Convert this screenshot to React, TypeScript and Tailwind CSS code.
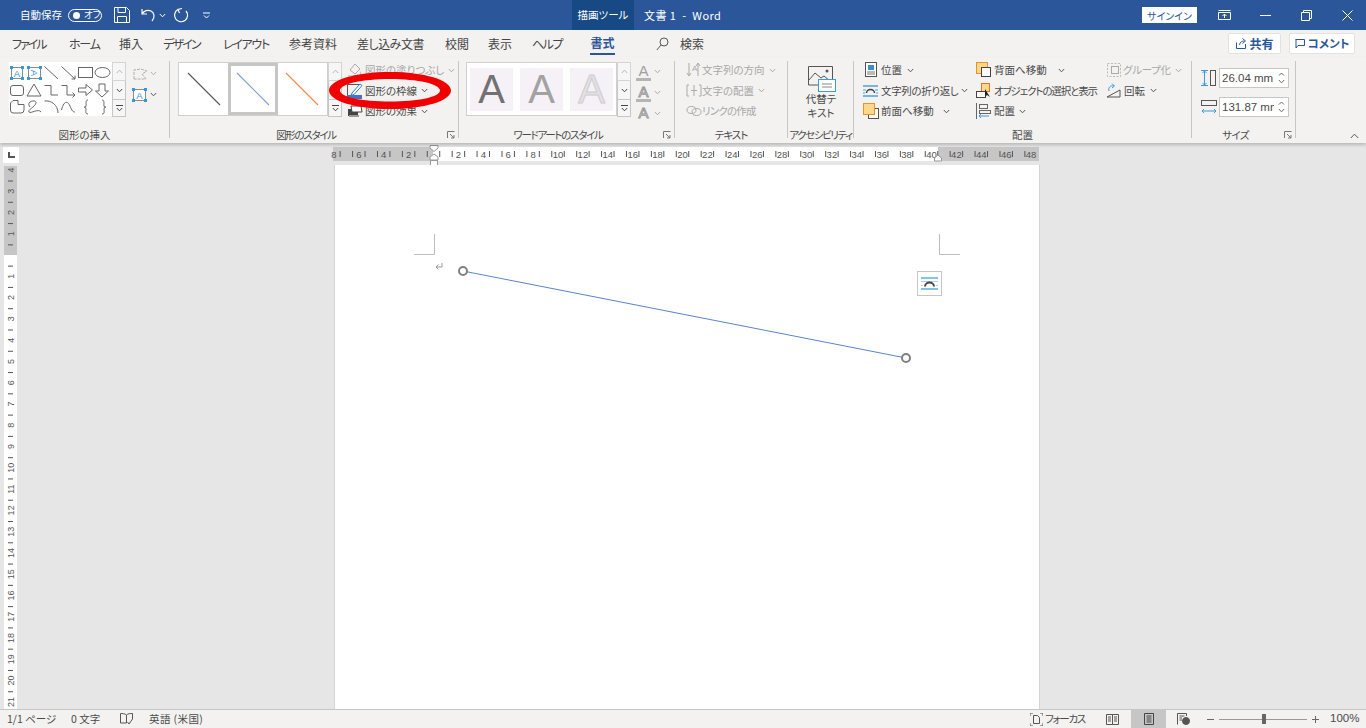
import React from "react";

const Chev = ({ c = "#555", cls = "" }: { c?: string; cls?: string }) => (
  <svg width="7" height="5" viewBox="0 0 7 5" className={"shrink-0 " + cls}>
    <path d="M.8 1 3.5 3.8 6.2 1" fill="none" stroke={c} strokeWidth="1" />
  </svg>
);

const I = ({ children, w = 16, h = 16 }: { children: React.ReactNode; w?: number; h?: number }) => (
  <svg width={w} height={h} viewBox={`0 0 ${w} ${h}`} className="shrink-0" fill="none">
    {children}
  </svg>
);

const Item = ({ icon, label, dim, chevCls, textCls }: { icon: React.ReactNode; label: string; dim?: boolean; chevCls?: string; textCls?: string }) => (
  <div className={"flex h-[20.5px] items-center whitespace-nowrap " + (dim ? "text-[#a8a8a8]" : "text-[#4a4a4a]")}>
    {icon}
    <span className={textCls ?? "ml-[2px]"}>{label}</span>
    {chevCls !== "none" && <Chev c={dim ? "#a8a8a8" : "#555"} cls={chevCls ?? "ml-[4px]"} />}
  </div>
);

const Launcher = () => (
  <svg width="8" height="8" viewBox="0 0 8 8" className="absolute right-[3px] top-[3px]" fill="none" stroke="#777">
    <path d="M.5 7V.5H7.5M3 3l4 4M7 4v3H4" />
  </svg>
);

const Group = ({ w, label, labelCls = "", launcher, children }: { w: string; label: string; labelCls?: string; launcher?: boolean; children: React.ReactNode }) => (
  <div className={"flex h-[77px] shrink-0 flex-col border-r border-[#c8c6c4] " + w}>
    <div className="flex h-[67px] shrink-0">{children}</div>
    <div className={"relative h-[13px] shrink-0 whitespace-nowrap text-center text-[10.5px] leading-[13px] text-[#4a4a4a] " + labelCls}>
      {label}
      {launcher && <Launcher />}
    </div>
  </div>
);

const Scroll = () => (
  <div className="flex w-[14px] shrink-0 flex-col">
    <div className="flex h-[19px] items-center justify-center border border-[#d4d4d4] bg-[#f6f6f6]">
      <svg width="7" height="5" viewBox="0 0 7 5"><path d="M.8 4 3.5 1.2 6.2 4" fill="none" stroke="#b5b5b5" /></svg>
    </div>
    <div className="flex h-[18px] items-center justify-center border-x border-[#c6c6c6] bg-[#f6f6f6]">
      <Chev c="#444" />
    </div>
    <div className="flex h-[18px] flex-col items-center justify-center border border-[#c6c6c6] bg-[#f6f6f6]">
      <div className="mb-[1px] h-[1px] w-[7px] bg-[#444]" />
      <Chev c="#444" />
    </div>
  </div>
);

const TextBox = ({ x, y, w, h, vert }: { x: number; y: number; w: number; h: number; vert?: boolean }) => (
  <g>
    <rect x={x} y={y} width={w} height={h} fill="#fff" stroke="#8a8a8a" />
    <text x={x + w / 2} y={y + h / 2 + 3.5} textAnchor="middle" fontSize="9.5" fontFamily="Liberation Sans" fill="#2f8fd8" stroke="none" transform={vert ? `rotate(90 ${x + w / 2} ${y + h / 2})` : undefined}>A</text>
    {[[x, y], [x + w, y], [x, y + h], [x + w, y + h]].map(([a, b], i) => (
      <rect key={i} x={a - 1.5} y={b - 1.5} width="3" height="3" fill="#2f9ae0" stroke="none" />
    ))}
  </g>
);

const ShapeGallery = () => (
  <svg width="103" height="54" viewBox="9 62 103 54" className="shrink-0 bg-white" fill="none" stroke="#666" strokeWidth="1">
    <TextBox x={11.5} y={67.5} w={11} h={11} />
    <TextBox x={28.5} y={67.5} w={12} h={11} vert />
    <path d="M44.5 66.5 58 79" />
    <path d="M61.5 66.5 75 79M75 75.5V79h-3.5" />
    <rect x="78.5" y="67.5" width="14" height="10" />
    <ellipse cx="102.5" cy="72.5" rx="7.5" ry="5" />
    <rect x="10.5" y="85.5" width="13" height="10" rx="2.5" />
    <path d="M34 84 41 96H27Z" />
    <path d="M44.5 85.5H51V95H58" />
    <path d="M61.5 85.5H67V95H75M72.5 92.5 75 95l-2.5 2.5" />
    <path d="M78.5 88H86V84.5L92.5 90 86 95.5V92H78.5Z" />
    <path d="M99 84H105V91H108.5L102 97 95.5 91H99Z" />
    <path d="M10.5 103 13 100.5H18V104.5H24V110Q24 113 21 113H13Q10.5 113 10.5 110Z" />
    <path d="M30 107C25 101 37 99 36 103S27 110 29 112 38 108 41 112" />
    <path d="M44.5 101C51 100 58 105 58 113" />
    <path d="M61.5 110C64 100 68 101 70 106S73 112 75 112" />
    <path d="M88 100C85 100 86.5 104 86 106S84 107 84 107 86 107 86 109 85 114 88 114" />
    <path d="M102 100C105 100 103.5 104 104 106S106 107 106 107 104 107 104 109 105 114 102 114" />
  </svg>
);

const StyleGallery = () => (
  <div className="flex h-[54px] w-[150px] shrink-0 border border-[#d0d0d0] bg-white">
    <div className="flex w-[50px] items-center justify-center">
      <svg width="36" height="36" viewBox="0 0 36 36"><path d="M2 2 34 34" stroke="#555" strokeWidth="1.1" /></svg>
    </div>
    <div className="flex w-[50px] items-center justify-center border-[3px] border-[#c6c6c6]">
      <svg width="36" height="36" viewBox="0 0 36 36"><path d="M2 2 34 34" stroke="#7f9fdc" strokeWidth="1.1" /></svg>
    </div>
    <div className="flex w-[50px] items-center justify-center">
      <svg width="36" height="36" viewBox="0 0 36 36"><path d="M2 2 34 34" stroke="#f08a45" strokeWidth="1.1" /></svg>
    </div>
  </div>
);

const WordArt = ({ cls }: { cls: string }) => (
  <div className={"flex h-[43px] w-[43px] items-center justify-center bg-[#f5f1f6] text-[40px] leading-none [font-family:'Liberation_Sans',sans-serif] " + cls}>A</div>
);

const TextA = ({ bar, stroke }: { bar?: boolean; stroke?: boolean }) => (
  <span className="relative flex h-[18px] w-[15px] flex-col items-center">
    <span className={"text-[15px] leading-[15px] [font-family:'Liberation_Sans',sans-serif] " + (stroke ? "text-white [-webkit-text-stroke:1px_#9a9a9a]" : "text-[#a0a0a0]")}>A</span>
    {bar && <span className="h-[3px] w-[15px] bg-[#b5b5b5]" />}
  </span>
);

const SizeInput = ({ value, icon }: { value: string; icon: React.ReactNode }) => (
  <div className="flex h-[28.5px] items-center">
    <div className="flex w-[18px] justify-start">{icon}</div>
    <div className="flex h-[20px] w-[70px] border border-[#c6c6c6] bg-white text-[11.5px] leading-[18px] text-[#4a4a4a]">
      <div className="w-[54px] overflow-hidden whitespace-nowrap pl-[2px] [font-family:'Liberation_Sans',sans-serif]">{value}</div>
      <div className="flex w-[14px] flex-col items-center justify-center gap-[3px]">
        <svg width="7" height="4" viewBox="0 0 7 4"><path d="M1 3.5 3.5 1 6 3.5" fill="none" stroke="#666" /></svg>
        <Chev c="#666" />
      </div>
    </div>
  </div>
);

const HRuler = () => {
  const U = 12.45;
  const zero = 100;
  const nums: number[] = [];
  for (let n = -8; n <= 48; n += 2) if (n !== 0) nums.push(n);
  const ticks: number[] = [];
  for (let n = -7.5; n <= 48; n += 1) ticks.push(n);
  return (
    <svg width="706" height="22" viewBox="0 0 706 22" className="shrink-0 overflow-visible">
      <rect x="0" y="0" width="706" height="14" fill="#c6c6c6" />
      <rect x="100" y="0" width="505" height="14" fill="#fff" />
      {ticks.map((t) => (
        <rect key={t} x={zero + t * U} y="4" width="1" height="6" fill="#555" />
      ))}
      {nums.map((n) => (
        <text key={n} x={zero + n * U + 0.5} y="11" textAnchor="middle" fontSize="9.5" fill="#555" fontFamily="Liberation Sans">
          {Math.abs(n)}
        </text>
      ))}
      <path d="M97 -1.5H105V1L101 4.5 97 1Z" fill="#fff" stroke="#999" />
      <path d="M97 13V10L101 7 105 10V13Z" fill="#fff" stroke="#999" />
      <rect x="97.5" y="13.5" width="7" height="5" fill="#fff" stroke="#999" />
      <path d="M601.5 14V11L605 8 608.5 11V14Z" fill="#fff" stroke="#999" />
    </svg>
  );
};

const VRuler = () => {
  const U = 21.28;
  const zero = 90;
  const nums: number[] = [];
  for (let n = -4; n <= 21; n++) if (n !== 0) nums.push(n);
  const ticks: number[] = [];
  for (let n = -3.5; n <= 21; n += 1) ticks.push(n);
  return (
    <svg width="13" height="544" viewBox="0 0 13 544" className="shrink-0">
      <rect x="0" y="1" width="13" height="89" fill="#c6c6c6" />
      <rect x="0" y="90" width="13" height="454" fill="#fff" />
      {ticks.map((t) => (
        <rect key={t} x="4" y={zero + t * U} width="5" height="1" fill="#555" />
      ))}
      {nums.map((n) => {
        const y = zero + n * U;
        return (
          <text key={n} x="6.5" y={y + 3.5} textAnchor="middle" fontSize="9" fill="#555" fontFamily="Liberation Sans" transform={`rotate(-90 6.5 ${y})`}>
            {Math.abs(n)}
          </text>
        );
      })}
    </svg>
  );
};

export default function App() {
  return (
    <div className="relative flex h-[728px] w-[1366px] flex-col overflow-hidden bg-[#e6e6e6] [font-family:'Noto_Sans_CJK_JP',sans-serif] [font-feature-settings:'palt'] text-[10.5px]">
      {/* Title bar */}
      <div className="flex h-[30px] shrink-0 items-center bg-[#2b579a] text-white">
        <span className="ml-[20px] w-[42px] whitespace-nowrap text-[10.5px]">自動保存</span>
        <div className="ml-[6px] flex h-[13px] w-[34px] items-center rounded-full border border-white pl-[4px]">
          <div className="h-[7px] w-[7px] rounded-full bg-white" />
          <span className="ml-[4px] text-[9.5px] leading-none">オフ</span>
        </div>
        <svg width="16" height="16" viewBox="0 0 16 16" className="ml-[12px]" fill="none" stroke="#fff">
          <path d="M.5.5H12.5L15.5 3.5V15.5H.5Z" />
          <path d="M4 .5V5.5H11.5V.5M3.5 15.5V9.5H12.5V15.5" />
        </svg>
        <svg width="15" height="15" viewBox="0 0 15 15" className="ml-[11px]" fill="none" stroke="#fff" strokeWidth="1.2">
          <path d="M1 1V6H6M1 6C3 2.5 7 1.5 10 3S14.5 9 11 13" />
        </svg>
        <Chev c="#fff" cls="ml-[3px]" />
        <svg width="16" height="16" viewBox="0 0 16 16" className="ml-[7px]" fill="none" stroke="#fff" strokeWidth="1.2">
          <path d="M5 2.5A6.5 6.5 0 1 0 13 4M9 1.5 5 2.5 6.5 6" />
        </svg>
        <svg width="7" height="7" viewBox="0 0 7 7" className="ml-[14px]" fill="none" stroke="#fff">
          <path d="M0 1H7M1 3.5 3.5 6 6 3.5" />
        </svg>
        <div className="ml-[362px] flex h-[30px] w-[62px] items-center justify-center bg-[#174a84] text-[10.5px]">描画ツール</div>
        <span className="ml-[10px] w-[80px] whitespace-pre text-[11px] tracking-[0.45px]">文書 1  -  Word</span>
        <div className="ml-[418px] flex h-[16px] w-[55px] items-center justify-center bg-white text-[10px] text-[#2b579a]">サインイン</div>
        <svg width="13" height="10" viewBox="0 0 13 10" className="ml-[21px]" fill="none" stroke="#fff">
          <path d="M.5 2.5H12.5V9.5H.5ZM.5.5H12.5M6.5 8V4M4.5 6 6.5 4 8.5 6" />
        </svg>
        <div className="ml-[29px] h-[1px] w-[11px] bg-white" />
        <svg width="11" height="11" viewBox="0 0 11 11" className="ml-[30px]" fill="none" stroke="#fff">
          <path d="M.5 2.5H8.5V10.5H.5ZM2.5 2.5V.5H10.5V8.5H8.5" />
        </svg>
        <svg width="11" height="11" viewBox="0 0 11 11" className="ml-[30px]" fill="none" stroke="#fff">
          <path d="M.5.5 10.5 10.5M10.5.5.5 10.5" />
        </svg>
      </div>

      {/* Tabs */}
      <div className="flex h-[27px] shrink-0 items-center bg-[#f3f2f1] text-[12px] text-[#444]">
        <span className="ml-[12px] w-[34px] whitespace-nowrap tracking-[-2px]">ファイル</span>
        <span className="ml-[23px] w-[30px] whitespace-nowrap tracking-[-1.2px]">ホーム</span>
        <span className="ml-[20px] w-[24px] whitespace-nowrap">挿入</span>
        <span className="ml-[20px] w-[37px] whitespace-nowrap tracking-[-1.8px]">デザイン</span>
        <span className="ml-[23px] w-[45px] whitespace-nowrap tracking-[-1.3px]">レイアウト</span>
        <span className="ml-[21px] w-[48px] whitespace-nowrap">参考資料</span>
        <span className="ml-[20px] w-[67px] whitespace-nowrap tracking-[-0.5px]">差し込み文書</span>
        <span className="ml-[21px] w-[23px] whitespace-nowrap">校閲</span>
        <span className="ml-[20px] w-[23px] whitespace-nowrap">表示</span>
        <span className="ml-[21px] w-[30px] whitespace-nowrap tracking-[-1.5px]">ヘルプ</span>
        <div className="ml-[28px] flex h-[27px] w-[25px] flex-col items-center justify-end">
          <span className="whitespace-nowrap font-bold leading-[20px] text-[#2b579a]">書式</span>
          <div className="mb-[2px] h-[2px] w-[25px] bg-[#2b579a]" />
        </div>
        <svg width="13" height="14" viewBox="0 0 13 14" className="ml-[41px]" fill="none" stroke="#555">
          <circle cx="8" cy="5" r="4" />
          <path d="M5 8 .8 13" />
        </svg>
        <span className="ml-[11px] whitespace-nowrap">検索</span>
        <div className="ml-[524px] flex h-[21px] w-[53px] items-center justify-center gap-[3px] rounded-[2px] border border-[#e4e2e0] bg-white font-bold text-[#2b579a]">
          <svg width="11" height="11" viewBox="0 0 11 11" fill="none" stroke="#2b579a">
            <path d="M.5 4.5V10.5H9.5V6M3.5 7C4 4 6 3 8 3M6.5.5 9.5 3 6.5 5.5" />
          </svg>
          共有
        </div>
        <div className="ml-[8px] flex h-[21px] w-[66px] items-center justify-center gap-[3px] rounded-[2px] border border-[#e4e2e0] bg-white text-[11.5px] font-bold text-[#2b579a]">
          <svg width="10" height="10" viewBox="0 0 10 10" fill="none" stroke="#2b579a">
            <path d="M.5.5H9.5V6.5H3L1 9V.5" />
          </svg>
          コメント
        </div>
      </div>

      {/* Ribbon */}
      <div className="relative flex h-[86px] shrink-0 bg-[#f3f2f1] pt-[4px] shadow-[0_2px_3px_rgba(0,0,0,0.2)]">
        <Group w="w-[170px]" label="図形の挿入">
          <div className="ml-[9px] mt-[1px] flex h-[55px]"><ShapeGallery /><Scroll /></div>
          <div className="ml-[6px] flex flex-col">
            <div className="flex h-[21px] items-center pt-[4px]">
              <I w={16} h={14}>
                <path d="M2 12V3L9 2 15 4 10 7 14 12Z" stroke="#b0b0b0" strokeDasharray="3 1" />
              </I>
              <Chev c="#b0b0b0" cls="ml-[2px]" />
            </div>
            <div className="flex h-[21px] items-center pt-[4px]">
              <svg width="15" height="14" viewBox="0 0 15 14" className="shrink-0"><TextBox x={1.5} y={1.5} w={12} h={11} /></svg>
              <Chev cls="ml-[3px]" />
            </div>
          </div>
        </Group>

        <Group w="w-[289px]" label="図形のスタイル" labelCls="pr-[16px] tracking-[-1.3px]" launcher>
          <div className="ml-[8px] mt-[1px] flex h-[55px]"><StyleGallery /><Scroll /></div>
          <div className="-mt-[1px] ml-[5px] flex flex-col">
            <Item dim label="図形の塗りつぶし" icon={<I><path d="M3 8 8 2 13 7 8 12Z" stroke="#aaa" /><path d="M13 9Q15 12 14 13T13 9" fill="#bbb" /><rect y="13" x="1" width="13" height="3" fill="#d0d0d0" /></I>} />
            <Item label="図形の枠線" icon={<I><path d="M12.5 4V1.5H.5V12" stroke="#555" /><path d="M5 10 13 1 15 2.5 7 11.5 4 12.5Z" fill="#fff" stroke="#2b7cd3" /><rect y="12" width="15" height="4" fill="#4472c4" /></I>} />
            <Item label="図形の効果" icon={<I><path d="M1 6H11V13H1Z" fill="#444" /><path d="M4 3H14L15 9H5Z" fill="#fff" stroke="#444" /><path d="M2 13 12 13" stroke="#999" strokeWidth="2" /></I>} />
          </div>
        </Group>

        <Group w="w-[216px]" label="ワードアートのスタイル" labelCls="pr-[17px] tracking-[-1.3px]" launcher>
          <div className="ml-[7px] mt-[1px] flex h-[55px]">
            <div className="flex h-[54px] w-[151px] shrink-0 items-center gap-[7px] border border-[#d0d0d0] bg-white pl-[3px]">
              <WordArt cls="text-[#727272]" />
              <WordArt cls="text-[#a2a2a2]" />
              <WordArt cls="text-[#e3e0e3] [-webkit-text-stroke:1px_#cfcdcf]" />
            </div>
            <Scroll />
          </div>
          <div className="ml-[5px] flex flex-col">
            <div className="flex h-[21px] items-center"><TextA bar /><Chev c="#aaa" cls="ml-[3px]" /></div>
            <div className="flex h-[21px] items-center"><TextA bar stroke /><Chev c="#aaa" cls="ml-[3px]" /></div>
            <div className="flex h-[21px] items-center"><TextA stroke /><Chev c="#aaa" cls="ml-[3px]" /></div>
          </div>
        </Group>

        <Group w="w-[113px]" label="テキスト" labelCls="tracking-[-1px]">
          <div className="-mt-[1px] ml-[11px] flex flex-col">
            <Item dim label="文字列の方向" textCls="ml-0" icon={<I><path d="M3 1V13M1 11 3 14 5 11M12 14V2M10 4 12 1 14 4" stroke="#aaa" /><text x="6" y="9" fontSize="8" fill="#aaa" fontFamily="Liberation Sans">A</text></I>} />
            <Item dim label="文字の配置" textCls="ml-0" icon={<I><path d="M3 2H1V13H3M13 2H15V13H13M8 2V13M5 7.5H11" stroke="#aaa" /></I>} />
            <Item dim label="リンクの作成" textCls="ml-0 tracking-[-0.8px]" chevCls="none" icon={<I><ellipse cx="5.5" cy="7" rx="4.5" ry="3.5" stroke="#aaa" /><ellipse cx="10.5" cy="9" rx="4.5" ry="3.5" stroke="#aaa" /></I>} />
          </div>
        </Group>

        <Group w="w-[66px]" label="アクセシビリティ" labelCls="tracking-[-1.4px]">
          <div className="flex w-full flex-col items-center pl-[1px] pt-[5px]">
            <svg width="28" height="27" viewBox="0 0 28 27" fill="none" className="ml-[1px] shrink-0">
              <path d="M19 19H.5V.5H24.5V14" stroke="#555" />
              <path d="M1 14 7 7 13 12 16 10 22 15" stroke="#555" />
              <circle cx="19" cy="5" r="1.5" fill="#555" />
              <rect x="10.5" y="13.5" width="17" height="12" fill="#fff" stroke="#3b9ad9" />
              <path d="M14 18H24M14 21H24" stroke="#888" />
            </svg>
            <div className="-mt-[1px] text-center text-[10.5px] leading-[14px] text-[#4a4a4a]">代替テ<br />キスト</div>
          </div>
        </Group>

        <Group w="w-[338px]" label="配置">
          <div className="-mt-[1px] ml-[9px] flex w-[113px] shrink-0 flex-col">
            <Item label="位置" chevCls="ml-[5px]" icon={<I><rect x="2.5" y=".5" width="11" height="14" stroke="#555" fill="#fff" /><rect x="5" y="3" width="6" height="5" fill="#3b8fd0" /><path d="M4 10H12M4 12H12" stroke="#777" /></I>} />
            <Item label="文字列の折り返し" textCls="ml-[2px] tracking-[-0.35px]" chevCls="ml-[3px]" icon={<I><path d="M0 3H15M0 13H15" stroke="#4aa3df" strokeWidth="1.5" /><path d="M0 7H3M0 10H2M12 7H15M13 10H15" stroke="#4aa3df" /><path d="M3.5 10A4 3.5 0 0 1 11.5 10" stroke="#444" strokeWidth="1.5" /></I>} />
            <Item label="前面へ移動" chevCls="ml-[9px]" icon={<I><rect x="5.5" y="5.5" width="10" height="10" stroke="#555" fill="#fff" /><rect x=".5" y=".5" width="11" height="11" fill="#fbd88a" stroke="#e8912d" /></I>} />
          </div>
          <div className="-mt-[1px] flex w-[130px] shrink-0 flex-col">
            <Item label="背面へ移動" chevCls="ml-[11px]" icon={<I><rect x=".5" y=".5" width="11" height="11" fill="#fbd88a" stroke="#e8912d" /><rect x="5.5" y="5.5" width="9" height="9" stroke="#444" fill="#fff" /></I>} />
            <Item label="オブジェクトの選択と表示" textCls="ml-[2px] tracking-[-1.15px]" chevCls="none" icon={<I><rect x="5.5" y=".5" width="8" height="8" fill="#fbd88a" stroke="#e8712d" /><rect x=".5" y="8.5" width="9" height="6" stroke="#444" fill="#fff" /><path d="M9 6V14L11 12 14 14Z" fill="#222" /></I>} />
            <Item label="配置" chevCls="ml-[4px]" icon={<I><path d="M.5 0V16" stroke="#666" /><rect x="3.5" y="1.5" width="8" height="4" stroke="#666" /><rect x="3.5" y="7.5" width="11" height="3" stroke="#666" /><path d="M13 13H3M5 11 3 13 5 15" stroke="#3b9ad9" /></I>} />
          </div>
          <div className="-mt-[1px] flex flex-col">
            <Item dim label="グループ化" textCls="ml-[1px] tracking-[-0.3px]" icon={<I><rect x="1.5" y="1.5" width="13" height="13" stroke="#bbb" strokeDasharray="2 1.5" /><rect x="5.5" y="4.5" width="7" height="7" stroke="#aaa" /></I>} />
            <Item label="回転" textCls="ml-[2px]" chevCls="ml-[5px]" icon={<I><path d="M1 14 14 7V14Z" stroke="#555" /><path d="M3 8C2 5 4 2 8 3M6 .5 8.5 3 6 5" stroke="#3b9ad9" /></I>} />
          </div>
        </Group>

        <Group w="w-[104px]" label="サイズ" labelCls="pr-[16px] tracking-[-0.7px]" launcher>
          <div className="ml-[9px] flex flex-col pt-[3px]">
            <SizeInput value="26.04 mm" icon={<I h={16} w={16}><rect x="9.5" y=".5" width="5" height="15" stroke="#555" /><path d="M3.5 1V15M1.5 3 3.5 1 5.5 3M1.5 13 3.5 15 5.5 13M0 .5H7M0 15.5H7" stroke="#3b9ad9" /></I>} />
            <SizeInput value="131.87 mm" icon={<I h={16} w={16}><rect x=".5" y="1.5" width="15" height="5" stroke="#555" /><path d="M1 12H15M3 10 1 12 3 14M13 10 15 12 13 14" stroke="#3b9ad9" /></I>} />
          </div>
        </Group>

        <svg width="9" height="6" viewBox="0 0 9 6" className="absolute right-[7px] top-[76px]" fill="none" stroke="#555">
          <path d="M.8 5 4.5 1.2 8.2 5" />
        </svg>

        {/* hand-drawn red mark over the ribbon */}
        <svg width="122" height="37" viewBox="0 0 122 37" className="absolute left-[329px] top-[15px]">
          <path fillRule="evenodd" fill="#f00000" d="M61 0C95 0 122 8 122 18.5S95 37 61 37 0 29 0 18.5 27 0 61 0ZM61 7C33 7 11 12 11 18.5S33 29.5 61 29.5 111 25 111 18.5 89 7 61 7Z" />
        </svg>
      </div>

      {/* Document */}
      <div className="flex h-[22px] shrink-0 pl-[3px] pt-[4px]">
        <div className="flex h-[16px] w-[16px] shrink-0 items-center justify-center bg-white">
          <svg width="7" height="6" viewBox="0 0 7 6"><path d="M0 0H2V4H7V6H0Z" fill="#555" /></svg>
        </div>
        <div className="ml-[314px]"><HRuler /></div>
      </div>
      <div className="flex min-h-0 flex-1">
        <div className="ml-[4px]"><VRuler /></div>
        <div className="relative ml-[317px] w-[706px] shrink-0 border-r border-l border-[#d4d4d4] bg-white">
          <svg width="704" height="544" viewBox="0 0 704 544" className="absolute left-0 top-0" fill="none">
            <path d="M99.5 69V89.5H79M604.5 69V89.5H625" stroke="#bdbdbd" />
            <path d="M107 98V102H101M103.5 99.5 101 102 103.5 104.5" stroke="#999" />
            <path d="M128 106 571 193" stroke="#5b83cc" />
            <circle cx="128" cy="106" r="4" fill="#fff" stroke="#808080" strokeWidth="2" />
            <circle cx="571" cy="193" r="4" fill="#fff" stroke="#808080" strokeWidth="2" />
          </svg>
          <div className="absolute left-[582px] top-[106px] flex h-[25px] w-[25px] items-center justify-center border border-[#c6c6c6] bg-white">
            <svg width="17" height="13" viewBox="0 0 17 13" fill="none">
              <path d="M0 1H17M0 12H17" stroke="#5fb0e3" strokeWidth="1.5" />
              <path d="M0 4.5H17M0 8.5H2M15 8.5H17" stroke="#a9d4ef" />
              <path d="M4 9.5A4.5 4 0 0 1 13 9.5" stroke="#444" strokeWidth="2" />
            </svg>
          </div>
        </div>
      </div>

      {/* Status bar */}
      <div className="flex h-[19px] shrink-0 items-center border-t border-[#c6c6c6] bg-[#f3f2f1] text-[10.5px] text-[#4a4a4a]">
        <span className="ml-[7px] w-[47px] whitespace-nowrap">1/1 ページ</span>
        <span className="ml-[17px] w-[32px] whitespace-nowrap">0 文字</span>
        <svg width="13" height="12" viewBox="0 0 13 12" className="ml-[17px]" fill="none" stroke="#555">
          <path d="M6.5 2C5 .5 2 .5.5.5V10H6.5V2C8 .5 10 .5 12.5.5V6L9 11 7.5 9" />
        </svg>
        <span className="ml-[16px] w-[60px] whitespace-nowrap tracking-[0.4px]">英語 (米国)</span>
        <svg width="13" height="13" viewBox="0 0 13 13" className="ml-[821px]" fill="none" stroke="#555">
          <path d="M0 3V0H3M10 0H13V3M13 10V13H10M3 13H0V10" />
          <path d="M3.5 2.5H7.5L9.5 4.5V10.5H3.5Z" />
        </svg>
        <span className="ml-[2px] w-[40px] whitespace-nowrap tracking-[-1.3px]">フォーカス</span>
        <svg width="13" height="11" viewBox="0 0 13 11" className="ml-[21px]" fill="none" stroke="#555">
          <path d="M.5.5H6.5V10.5H.5ZM6.5.5H12.5V10.5H6.5ZM2 3H5M2 5H5M2 7H5M8 3H11M8 5H11M8 7H11" />
        </svg>
        <div className="ml-[12px] flex h-[19px] w-[35px] items-center justify-center bg-[#c6c6c6]">
          <svg width="10" height="12" viewBox="0 0 10 12" fill="none" stroke="#444">
            <path d="M.5.5H9.5V11.5H.5ZM2.5 3H7.5M2.5 5H7.5M2.5 7H7.5M2.5 9H7.5" />
          </svg>
        </div>
        <svg width="13" height="12" viewBox="0 0 13 12" className="ml-[11px]" fill="none" stroke="#555">
          <path d="M.5 11.5V.5H9.5V3M2.5 3H7.5M2.5 5H5M2.5 7H5" />
          <circle cx="9" cy="8" r="3.5" fill="#555" />
        </svg>
        <div className="ml-[17px] h-[1px] w-[7px] bg-[#666]" />
        <div className="relative ml-[5px] h-[1px] w-[88px] bg-[#999]">
          <div className="absolute left-[43px] top-[-5px] h-[10px] w-[4px] bg-[#666]" />
        </div>
        <svg width="7" height="7" viewBox="0 0 7 7" className="ml-[5px]" stroke="#666"><path d="M0 3.5H7M3.5 0V7" /></svg>
        <span className="ml-[11px] whitespace-nowrap [font-family:'Liberation_Sans',sans-serif] text-[11.5px]">100%</span>
      </div>
    </div>
  );
}
